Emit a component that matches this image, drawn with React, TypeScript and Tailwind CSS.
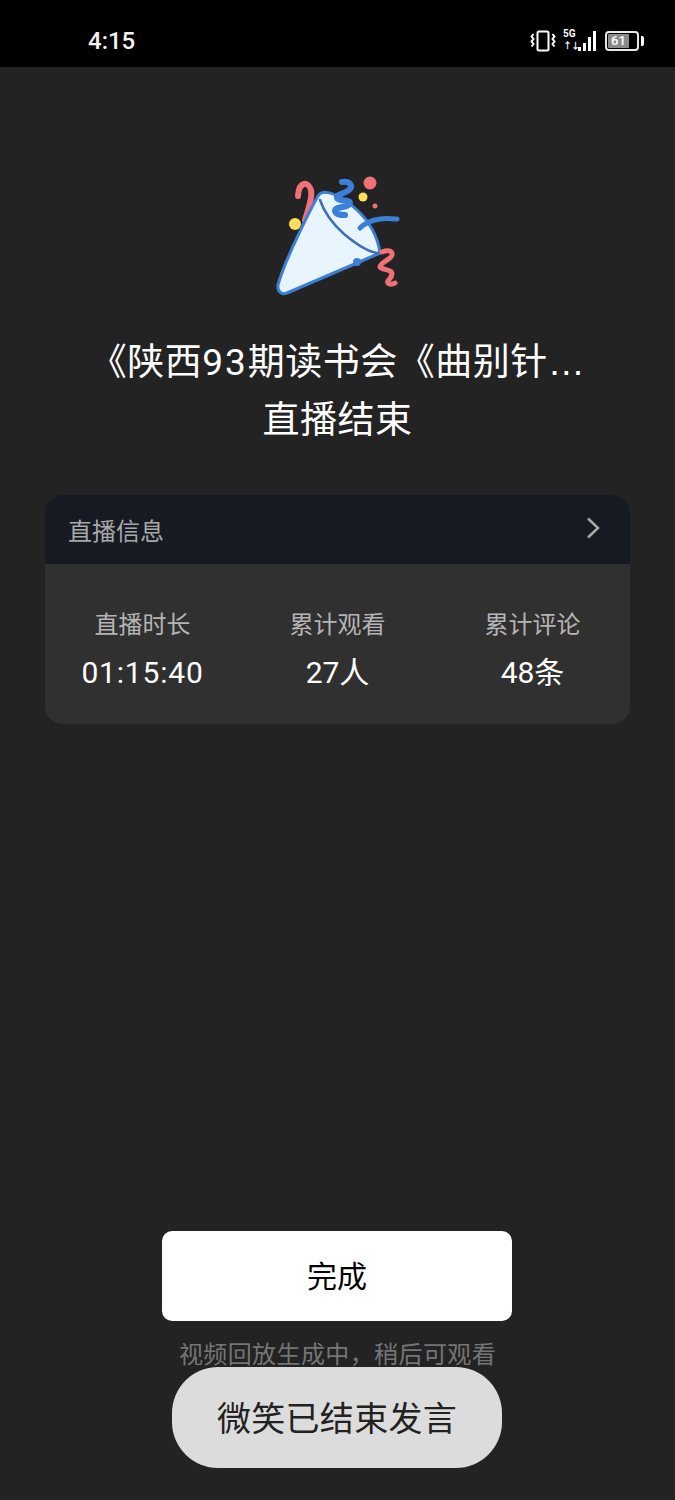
const FONT = "font-['Roboto','Noto_Sans_CJK_SC',sans-serif]"

function StatusIcons() {
  return (
    <div className="flex items-center gap-[4px] text-white">
      {/* vibrate */}
      <svg width="26" height="22" viewBox="0 0 26 22" fill="none" stroke="white">
        <rect x="7.5" y="1.5" width="11" height="19" rx="1.5" strokeWidth="2" />
        <path d="M3.5 4l-2 2.5 2 2.5-2 2.5 2 2.5-2 2.5M22.5 4l2 2.5-2 2.5 2 2.5-2 2.5 2 2.5" strokeWidth="2" />
      </svg>
      {/* network */}
      <div className="relative w-[36px] h-[22px] ml-[3px]">
        <span className="absolute left-0 top-[-2px] text-[10px] leading-[12px] font-bold">5G</span>
        <span className="absolute left-0 top-[11px] text-[9px] leading-[11px] font-bold tracking-[-1px]">↑↓</span>
        <svg className="absolute left-0 top-0" width="36" height="22" viewBox="0 0 36 22" fill="white">
          <rect x="15" y="17" width="3" height="4" />
          <rect x="20" y="13" width="3" height="8" />
          <rect x="25" y="7" width="3" height="14" />
          <rect x="30" y="1" width="3" height="20" />
        </svg>
      </div>
      {/* battery */}
      <div className="flex items-center ml-[2px] gap-[2px]">
        <div className="w-[34px] h-[20px] rounded-[4px] border-2 border-[#e8e8e8] p-[1px] flex">
          <div className="w-[21px] bg-[#8a8a8a] rounded-[1px] relative">
            <span className="absolute left-[3px] top-0 text-[13px] leading-[14px] font-medium text-white">61</span>
          </div>
        </div>
        <div className="w-[3px] h-[10px] bg-white rounded-r-[2px]" />
      </div>
    </div>
  )
}

function Party() {
  return (
    <svg width="150" height="135" viewBox="0 0 150 135" fill="none" strokeLinecap="round" strokeLinejoin="round">
      <path d="M45 50C48 40 53 27 51 20C48 11 39 11 38 26" stroke="#f27077" strokeWidth="6" />
      <circle cx="35" cy="54" r="6" fill="#ffdc5a" />
      <circle cx="110" cy="13" r="6.5" fill="#f27077" />
      <circle cx="103" cy="27" r="4.5" fill="#ffdc5a" />
      <circle cx="115" cy="36" r="2.5" fill="#e57373" />
      <path d="M58 26C50 40 24 92 18 115C17 122 22 125 27 123L120 83C118 66 108 50 97 40C84 28 64 16 58 26Z" fill="#e8f5ff" stroke="#3c7fd8" strokeWidth="3" />
      <path d="M60 30C64 42 74 55 84 64C96 74 110 83 119 83" stroke="#3c6fb8" strokeWidth="2.5" />
      <circle cx="97" cy="92" r="4" fill="#3c7fd8" />
      <path d="M82 12C90 11 94 16 89 20C84 24 76 24 77 28C78 32 90 29 90 33C89 38 75 36 75 41C76 45 81 45 85 45" stroke="#3c7fd8" strokeWidth="6" />
      <path d="M100 58C105 53 113 50 120 49C126 48 132 49 137 49" stroke="#3c7fd8" strokeWidth="5" />
      <path d="M122 82C127 80 133 80 132 85C131 90 120 92 120 97C122 100 132 99 132 104C132 109 126 110 128 113C130 115 133 114 135 113" stroke="#f27077" strokeWidth="5" />
    </svg>
  )
}

function Stat({ label, value, wide }: { label: string; value: string; wide?: boolean }) {
  return (
    <div className="flex flex-col items-center">
      <div className="text-[24px] leading-[32px] text-[#b4b4b4]">{label}</div>
      <div className={`mt-[13px] text-[30px] leading-[38px] text-white ${wide ? "tracking-[0.8px]" : ""}`}>{value}</div>
    </div>
  )
}

export default function App() {
  return (
    <div className={`${FONT} relative w-[675px] h-[1500px] bg-[#232323] flex flex-col overflow-hidden`}>
      {/* Status bar */}
      <div className="h-[67px] bg-black flex items-center justify-between pt-[14px] pl-[88px] pr-[31px] shrink-0">
        <span className="pt-[1px] text-[24px] font-medium text-[#f2f2f2]">4:15</span>
        <StatusIcons />
      </div>

      {/* Icon and title */}
      <div className="flex justify-center mt-[103px] mr-[5px]">
        <Party />
      </div>
      <div className="mt-[29px] text-center text-white text-[37px] leading-[58px] tracking-[0.5px]">
        <div>
          《陕西<span className="tracking-[2px]">93</span>期读书会《曲别针<span className="font-['Liberation_Sans']">…</span>
        </div>
        <div>直播结束</div>
      </div>

      {/* Live info card */}
      <div className="mx-[45px] mt-[45px] rounded-[18px] overflow-hidden bg-[#303030]">
        <div className="h-[69px] bg-[#161a22] flex items-center justify-between pl-[23px] pr-[30px]">
          <span className="pt-[4px] text-[24px] text-[#a8a8a8]">直播信息</span>
          <svg className="mb-[3px]" width="14" height="24" viewBox="0 0 14 24" fill="none" stroke="#a8a8a8" strokeWidth="2.5">
            <path d="M2 2.5L12 12 2 21.5" />
          </svg>
        </div>
        <div className="grid grid-cols-3 pt-[45px] pb-[32px]">
          <Stat label="直播时长" value="01:15:40" wide />
          <Stat label="累计观看" value="27人" />
          <Stat label="累计评论" value="48条" />
        </div>
      </div>

      {/* Bottom action */}
      <div className="mt-auto flex flex-col items-center pb-[129px]">
        <button className="w-[350px] h-[90px] mb-[1px] mr-[1px] bg-white rounded-[10px] text-[30px] text-black">完成</button>
        <div className="mt-[17px] text-[24px] leading-[32px] tracking-[0.4px] text-[#757575]">视频回放生成中，稍后可观看</div>
      </div>

      {/* Toast */}
      <div className="absolute left-[172px] top-[1367px] w-[330px] h-[101px] pt-[4px] rounded-[46px] bg-[#dcdcdc] flex items-center justify-center text-[34px] tracking-[0.3px] text-[#222222]">
        微笑已结束发言
      </div>
    </div>
  )
}
